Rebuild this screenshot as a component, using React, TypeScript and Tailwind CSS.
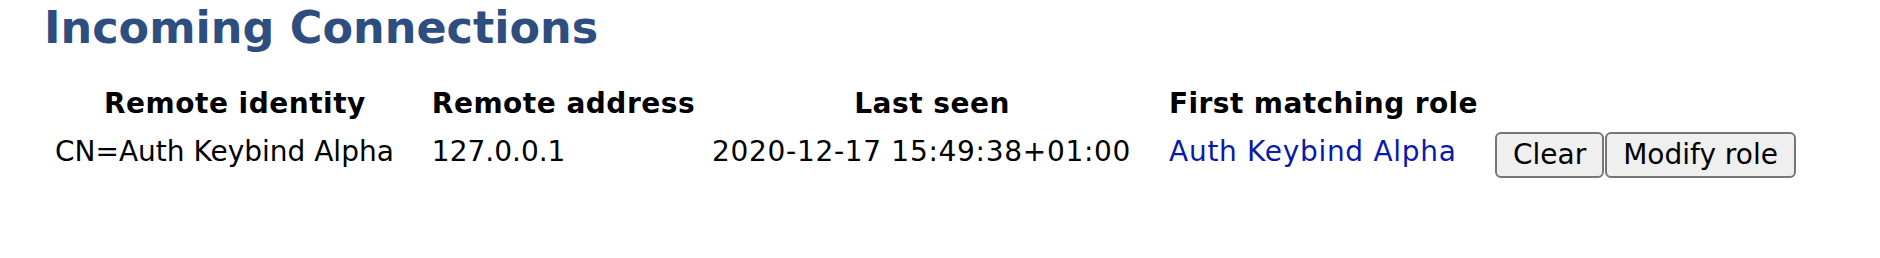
import React from 'react'

const rows = [
  {
    identity: 'CN=Auth Keybind Alpha',
    address: '127.0.0.1',
    lastSeen: '2020-12-17 15:49:38+01:00',
    role: 'Auth Keybind Alpha',
  },
]

const App = () => {
  return (
    <div className="w-[1880px] h-[258px] bg-white pl-[42px] pt-[2px] font-['DejaVu_Sans',Verdana,sans-serif] text-[28px] leading-[33px] text-black">
      <h1 className="text-[44.5px] leading-[51px] font-bold text-[#2d4e7e] mb-[31px] pl-[2px]">Incoming Connections</h1>

      <table className="border-separate border-spacing-[3.5px] ml-[3px]">
        <thead>
          <tr>
            <th className="px-[7px] py-0 font-bold text-center tracking-[0.5px]">Remote identity</th>
            <th className="px-[7px] py-0 font-bold text-center tracking-[0.5px]">Remote address</th>
            <th className="px-[7px] py-0 font-bold text-center tracking-[0.5px]">Last seen</th>
            <th className="px-[7px] py-0 font-bold text-center tracking-[0.4px]">First matching role</th>
            <th className="px-[7px] py-0"></th>
          </tr>
        </thead>
        <tbody>
          {rows.map((r) => (
            <tr key={r.identity}>
              <td className="pl-[7px] pr-[28px] py-[1.5px] align-middle">{r.identity}</td>
              <td className="pl-[7px] pr-[28px] py-[1.5px] align-middle">{r.address}</td>
              <td className="pl-[7px] pr-[28px] py-[1.5px] align-middle tracking-[0.7px]">{r.lastSeen}</td>
              <td className="pl-[7px] pr-[28px] py-[1.5px] align-middle">
                <a className="text-[#0a1aa8] cursor-pointer tracking-[0.7px]">{r.role}</a>
              </td>
              <td className="pl-[7px] pr-[28px] py-[1.5px] align-middle">
                <div className="flex gap-[1px] pt-[7px]">
                  <button className="bg-[#efefef] border-2 border-[#767676] rounded-[6px] px-[16px] py-[4.5px] leading-[33px] text-black">
                    Clear
                  </button>
                  <button className="bg-[#efefef] border-2 border-[#767676] rounded-[6px] px-[16px] py-[4.5px] leading-[33px] text-black">
                    Modify role
                  </button>
                </div>
              </td>
            </tr>
          ))}
        </tbody>
      </table>
    </div>
  )
}

export default App
